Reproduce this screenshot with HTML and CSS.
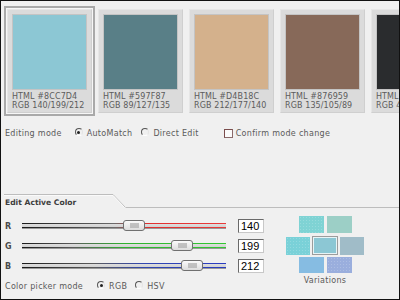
FILE: index.html
```html
<!DOCTYPE html>
<html lang="en">
<head>
    <meta charset="UTF-8">
    <title>Color editor</title>
    <link rel="stylesheet" href="styles.css">
</head>
<body>
<div class="window">

    <div class="swatches">
        <div class="card selected">
            <div class="chip" style="background:#8cc7d4"></div>
            <p>HTML #8CC7D4</p>
            <p>RGB 140/199/212</p>
        </div>
        <div class="card">
            <div class="chip" style="background:#597f87"></div>
            <p>HTML #597F87</p>
            <p>RGB 89/127/135</p>
        </div>
        <div class="card">
            <div class="chip" style="background:#d4b18c"></div>
            <p>HTML #D4B18C</p>
            <p>RGB 212/177/140</p>
        </div>
        <div class="card">
            <div class="chip" style="background:#876959"></div>
            <p>HTML #876959</p>
            <p>RGB 135/105/89</p>
        </div>
        <div class="card">
            <div class="chip" style="background:#2a2c2e"></div>
            <p>HTML #2A2C2E</p>
            <p>RGB 42/44/46</p>
        </div>
    </div>

    <div class="row editing">
        <span class="label">Editing mode</span>
        <span class="opt"><span class="radio on"></span>AutoMatch</span>
        <span class="opt"><span class="radio"></span>Direct Edit</span>
        <span class="opt confirm"><span class="check"></span>Confirm mode change</span>
    </div>

    <section class="editor">
        <div class="tabbar">
            <span class="tab">Edit Active Color</span>
            <svg class="slant" width="13" height="14" viewBox="0 0 13 14">
                <path d="M0 0.5 L12.5 13.5" stroke="#bdbdbd" stroke-width="1" fill="none"/>
                <path d="M0 1.5 L11.5 13.5" stroke="#fafafa" stroke-width="1" fill="none"/>
            </svg>
            <span class="rule"></span>
        </div>

        <div class="editor-body">
            <div class="channels">
                <div class="channel">
                    <b>R</b>
                    <div class="track red"><span class="thumb" style="left:101px"></span></div>
                    <span class="num">140</span>
                </div>
                <div class="channel">
                    <b>G</b>
                    <div class="track green"><span class="thumb" style="left:149px"></span></div>
                    <span class="num">199</span>
                </div>
                <div class="channel">
                    <b>B</b>
                    <div class="track blue"><span class="thumb" style="left:159px"></span></div>
                    <span class="num">212</span>
                </div>
                <div class="row picker">
                    <span class="label">Color picker mode</span>
                    <span class="opt"><span class="radio on"></span>RGB</span>
                    <span class="opt"><span class="radio"></span>HSV</span>
                </div>
            </div>

            <div class="variations">
                <div class="vrow top">
                    <span class="cell dots" style="background-color:#7fd3d4"></span>
                    <span class="cell" style="background-color:#9ccfc6"></span>
                </div>
                <div class="vrow mid">
                    <span class="cell dots" style="background-color:#7ad1d8"></span>
                    <span class="cell current" style="background-color:#8cc7d4"></span>
                    <span class="cell" style="background-color:#a0bcc8"></span>
                </div>
                <div class="vrow bottom">
                    <span class="cell" style="background-color:#86bce2"></span>
                    <span class="cell dots" style="background-color:#9aaedd"></span>
                </div>
                <p class="caption">Variations</p>
            </div>
        </div>
    </section>

</div>
</body>
</html>
```

FILE: styles.css
```css
*{
    margin: 0;
    padding: 0;
    box-sizing: border-box;
}

body{
    font-family: "DejaVu Sans", Verdana, sans-serif;
    font-size: 8px;
    color: #5a5a5a;
}

.window{
    width: 400px;
    height: 300px;
    border: 1px solid #111;
    background-color: #f0f0f0;
    overflow: hidden;
}

/* swatch strip */
.swatches{
    display: flex;
    gap: 6px;
    padding: 8px 0 0 6px;
}

.card{
    flex-shrink: 0;
    width: 85px;
    height: 104px;
    padding: 4px 0 0 4px;
    background-color: #dbdbdb;
    border: 1px solid;
    border-color: #e6e6e6 #cfcfcf #cfcfcf #e6e6e6;
}

.card.selected{
    box-shadow: 0 0 0 1px #f6f6f6, 0 0 0 3px #a9a9a9;
}

.chip{
    width: 75px;
    height: 76px;
    border: 1px solid #c4c4c4;
    margin-bottom: 2px;
}

.card p{
    line-height: 9px;
    letter-spacing: 0.1px;
    white-space: nowrap;
    color: #5c5c5c;
}

/* option rows */
.row{
    display: flex;
    align-items: center;
    height: 12px;
    padding-left: 4px;
    letter-spacing: 0.3px;
    white-space: nowrap;
}

.editing{
    margin-top: 14px;
}

.opt{
    display: flex;
    align-items: center;
}

.editing .label{
    margin-right: 13px;
}

.editing .opt{
    margin-right: 9px;
}

.editing .confirm{
    margin-left: 16px;
}

.radio{
    display: flex;
    align-items: center;
    justify-content: center;
    width: 8px;
    height: 8px;
    margin: -2px 4px 0 0;
    border-radius: 50%;
    border: 1px solid;
    border-color: #555 #e4e4e4 #fff #555;
}

.radio.on::after{
    content: "";
    width: 3px;
    height: 3px;
    border-radius: 50%;
    background-color: #222;
}

.check{
    width: 9px;
    height: 9px;
    margin-right: 3px;
    border: 1px solid;
    border-color: #7a4c4c #8a6a6a #8a6a6a #7a4c4c;
    background-color: #fbfbfb;
}

/* edit active color */
.editor{
    margin-top: 55px;
}

.tabbar{
    display: flex;
    align-items: flex-end;
    height: 14px;
}

.tab{
    width: 109px;
    height: 14px;
    margin-left: 3px;
    padding: 3px 0 0 1px;
    border-top: 1px solid #bdbdbd;
    box-shadow: inset 0 1px 0 #fafafa;
    font-weight: bold;
    font-size: 7.6px;
    color: #3e3e3e;
    white-space: nowrap;
}

.slant{
    display: block;
}

.rule{
    flex: 1;
    height: 1px;
    background-color: #bdbdbd;
}

.editor-body{
    display: flex;
    margin-top: 8px;
}

.channels{
    width: 285px;
}

.channel{
    display: flex;
    align-items: center;
    height: 20px;
    padding-left: 4px;
}

.channel b{
    width: 17px;
    font-size: 8px;
    color: #4a4a4a;
}

.track{
    position: relative;
    width: 204px;
    height: 6px;
    border-bottom: 1px solid #9a9a9a;
}

.track.red{
    background: linear-gradient(#dedede, #d2d2d2) 0 1px/100% 3px no-repeat,
                linear-gradient(to right, #1a1a1a, #6a6a6a 45%, #e03030 62%, #e83a3a);
}

.track.green{
    background: linear-gradient(#dedede, #d2d2d2) 0 1px/100% 3px no-repeat,
                linear-gradient(to right, #1a1a1a, #5a5a5a 25%, #2fb02f 50%, #33c833);
}

.track.blue{
    background: linear-gradient(#dedede, #d2d2d2) 0 1px/100% 3px no-repeat,
                linear-gradient(to right, #1a1a1a, #5a5a5a 35%, #3046b0 60%, #2a3cc0);
}

.thumb{
    position: absolute;
    top: -3px;
    width: 22px;
    height: 11px;
    display: flex;
    align-items: center;
    justify-content: center;
    border: 1px solid #707070;
    border-radius: 3px;
    background: linear-gradient(#fbfbfb, #dcdcdc);
}

.thumb::after{
    content: "";
    width: 9px;
    height: 5px;
    background-image: radial-gradient(#a8a8a8 0.6px, transparent 0.9px);
    background-size: 2px 2px;
}

.num{
    width: 26px;
    height: 14px;
    margin-left: 12px;
    padding: 1px 0 0 2px;
    border: 1px solid;
    border-color: #6a6a6a #c8c8c8 #c8c8c8 #6a6a6a;
    background-color: #fff;
    font-family: "Liberation Sans", Arial, sans-serif;
    font-size: 11px;
    line-height: 11px;
    color: #000;
}

.picker{
    margin-top: 4px;
}

.picker .label{
    margin-right: 14px;
}

.picker .opt{
    margin-right: 8px;
}

/* variations */
.variations{
    display: flex;
    flex-direction: column;
    align-items: center;
    width: 78px;
}

.vrow{
    display: flex;
    align-items: center;
}

.vrow.top{
    gap: 3px;
}

.vrow.top .cell{
    width: 25px;
    height: 17px;
}

.vrow.mid{
    gap: 2px;
    margin-top: 3px;
}

.vrow.mid .cell{
    width: 24px;
    height: 18px;
}

.vrow.mid .cell.current{
    width: 26px;
    height: 19px;
    border: 1px solid #9c9c9c;
    box-shadow: inset 0 0 0 1px #e8f4f6;
}

.vrow.bottom{
    gap: 3px;
    margin-top: 2px;
}

.vrow.bottom .cell{
    width: 25px;
    height: 16px;
}

.cell.dots{
    background-image: radial-gradient(rgba(255,255,255,0.18) 0.5px, transparent 0.8px);
    background-size: 3px 3px;
}

.caption{
    margin-top: 3px;
    letter-spacing: 0.3px;
    color: #5a5a5a;
}
```
